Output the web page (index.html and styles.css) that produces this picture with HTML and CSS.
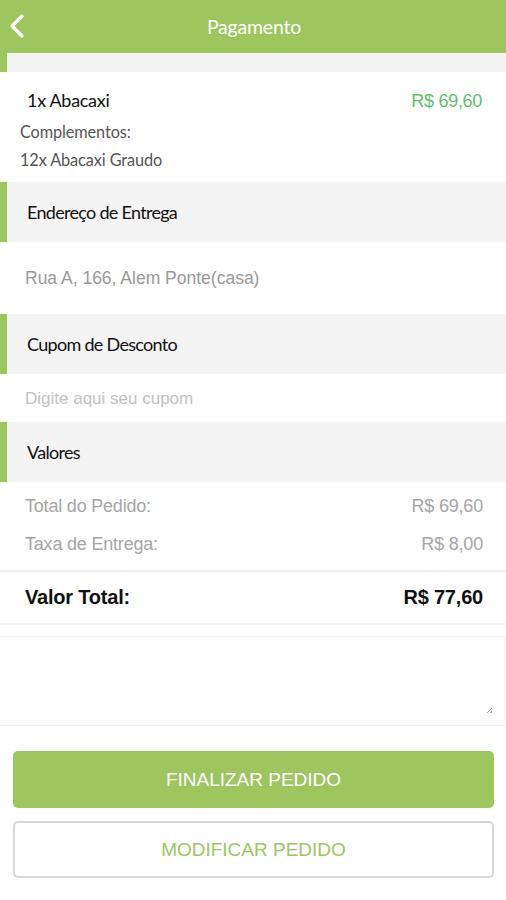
FILE: index.html
```html
<!DOCTYPE html>
<html lang="pt">
<head>
<meta charset="utf-8">
<title>Pagamento</title>
<link rel="stylesheet" href="styles.css">
</head>
<body>
<div class="app">
  <header class="topbar">
    <button class="back" aria-label="Voltar">
      <svg width="18" height="26" viewBox="0 0 18 26"><path d="M14 3 L4 13 L14 23" fill="none" stroke="#fff" stroke-width="3.4" stroke-linecap="round" stroke-linejoin="round"/></svg>
    </button>
    <h1 class="title">Pagamento</h1>
  </header>
  <div class="strip"></div>

  <section class="item">
    <div class="item-row">
      <span class="item-name">1x Abacaxi</span>
      <span class="item-price">R$ 69,60</span>
    </div>
    <div class="item-sub">Complementos:</div>
    <div class="item-sub">12x Abacaxi Graudo</div>
  </section>

  <div class="sec-head">Endereço de Entrega</div>
  <div class="sec-body address">Rua A, 166, Alem Ponte(casa)</div>

  <div class="sec-head">Cupom de Desconto</div>
  <div class="sec-body coupon">Digite aqui seu cupom</div>

  <div class="sec-head">Valores</div>
  <div class="values">
    <div class="val-row"><span>Total do Pedido:</span><span>R$ 69,60</span></div>
    <div class="val-row"><span>Taxa de Entrega:</span><span>R$ 8,00</span></div>
  </div>
  <div class="total-row"><span>Valor Total:</span><span>R$ 77,60</span></div>

  <div class="note">
    <div class="note-box"><span class="grip"></span></div>
  </div>

  <div class="actions">
    <button class="btn btn-primary">FINALIZAR PEDIDO</button>
    <button class="btn btn-outline">MODIFICAR PEDIDO</button>
  </div>
</div>
</body>
</html>
```
FILE: styles.css
```css
* { box-sizing: border-box; }
html, body { margin: 0; padding: 0; background: #fff; }
body { font-family: "Liberation Sans", Arial, sans-serif; }
.app { width: 506px; height: 900px; overflow: hidden; display: flex; flex-direction: column; }

.topbar {
  height: 53px; flex: none; background: #9dc65f; position: relative;
  display: flex; align-items: center; justify-content: center;
}
.back {
  position: absolute; left: 8px; top: 13px; border: 0; background: none; padding: 0;
  width: 18px; height: 26px; display: block;
}
.back svg { display: block; }
.title {
  margin: 0; font-family: Lato, sans-serif; font-weight: 400; font-size: 19.5px;
  color: #fff; letter-spacing: -0.2px; padding-left: 2px;
}
.strip { height: 19px; flex: none; background: #f4f4f4; border-left: 7px solid #9dc65f; }

.item { padding: 17px 24px 8px 20px; flex: none; }
.item-row { display: flex; justify-content: space-between; align-items: baseline; margin-bottom: 6px; }
.item-name {
  font-family: Lato, sans-serif; font-size: 18px; color: #111; letter-spacing: -0.3px; padding-left: 7px;
}
.item-price { font-size: 18px; color: #5fbf6e; letter-spacing: -0.3px; }
.item-sub {
  font-family: Lato, sans-serif; font-size: 16.3px; color: #555; line-height: 28px; letter-spacing: -0.1px;
}

.sec-head {
  height: 60px; flex: none; background: #f4f4f4; border-left: 7px solid #9dc65f;
  display: flex; align-items: center; padding-left: 20px;
  font-family: Lato, sans-serif; font-size: 18px; color: #111; letter-spacing: -0.7px;
}
.sec-body { display: flex; align-items: center; padding-left: 25px; flex: none; }
.address { height: 72px; color: #999; font-size: 17.5px; }
.coupon { height: 48px; color: #c2c2c2; font-size: 17px; padding-top: 2px; }

.values { padding: 5px 23px 7px 25px; flex: none; }
.val-row {
  display: flex; justify-content: space-between; font-size: 18px; color: #a6a6a6;
  line-height: 38px; letter-spacing: -0.2px;
}
.total-row {
  flex: none;
  border-top: 2px solid #efefef; border-bottom: 2px solid #f3f3f3;
  height: 55px; display: flex; justify-content: space-between; align-items: center;
  padding: 0 23px 1px 25px; font-weight: 700; font-size: 20px; color: #111; letter-spacing: -0.2px;
}

.note { padding-top: 11px; flex: none; }
.note-box {
  height: 90px; border: 1px solid #f2f2f2; border-left: 0; margin-right: 1px; position: relative;
}
.grip {
  position: absolute; right: 12px; bottom: 12px; width: 5px; height: 5px;
  background: linear-gradient(135deg, transparent 45%, #aaa 45%, #aaa 60%, transparent 60%, transparent 75%, #aaa 75%);
}

.actions { padding: 25px 12px 0 13px; display: flex; flex-direction: column; gap: 13px; flex: none; }
.btn {
  height: 57px; border-radius: 5px; font-family: "Liberation Sans", Arial, sans-serif;
  font-size: 19px; letter-spacing: 0; width: 100%; display: block; cursor: pointer;
}
.btn-primary { background: #9dc65f; border: 0; color: #fff; }
.btn-outline { background: #fff; border: 2px solid #d8d8d8; color: #9dc65f; }
```
